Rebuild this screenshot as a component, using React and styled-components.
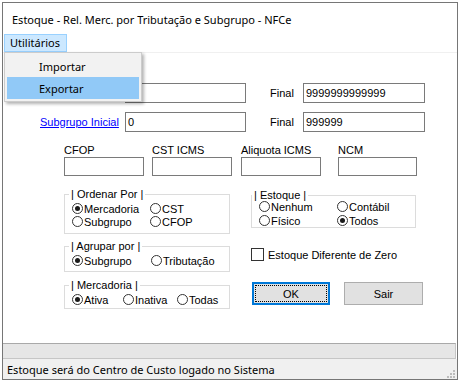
import React from 'react';
import styled, { createGlobalStyle } from 'styled-components';

const Global = createGlobalStyle`
  html, body { margin: 0; padding: 0; background: #ffffff; }
  body { width: 461px; height: 391px; overflow: hidden; }
`;

const ui = `"Noto Sans", "Liberation Sans", sans-serif`;
const vcl = `"Liberation Sans", Arial, sans-serif`;

const Window = styled.div`
  position: relative;
  margin: 2px 0 0 2px;
  width: 456px;
  height: 378px;
  box-sizing: border-box;
  border: 1px solid #767676;
  background: #ffffff;
  display: flex;
  flex-direction: column;
`;

const TitleBar = styled.div`
  flex: none;
  height: 30px;
  box-sizing: border-box;
  display: flex;
  align-items: center;
  padding: 3px 0 0 9px;
  font: 11px ${ui};
  color: #000;
`;

const MenuBar = styled.div`
  flex: none;
  height: 20px;
  box-sizing: border-box;
  display: flex;
  padding: 1px 0 0 1px;
  border-bottom: 1px solid #f0f0f0;
`;

const MenuItem = styled.div`
  height: 18px;
  box-sizing: border-box;
  padding: 0 6px 0 5px;
  border: 1px solid ${(p) => (p.$open ? '#99d1ff' : 'transparent')};
  background: ${(p) => (p.$open ? '#cce8ff' : 'transparent')};
  font: 11px/16px ${ui};
  color: #000;
`;

const Dropdown = styled.div`
  position: absolute;
  top: 49px;
  left: 1px;
  width: 138px;
  height: 50px;
  box-sizing: border-box;
  padding: 2px;
  border: 1px solid #cccccc;
  background: #f2f2f2;
  box-shadow: 2px 2px 3px rgba(0, 0, 0, 0.3);
  z-index: 2;
`;

const DropItem = styled.div`
  height: 22px;
  box-sizing: border-box;
  padding-left: 32px;
  display: flex;
  align-items: center;
  font: 11px ${ui};
  color: #000;
  background: ${(p) => (p.$hover ? '#91c9f7' : 'transparent')};
`;

const Client = styled.div`
  flex: 1;
  padding-top: 30px;
  box-sizing: border-box;
  font: 11px ${vcl};
  color: #000;
`;

const FieldRow = styled.div`
  display: flex;
  align-items: center;
  height: 20px;
  margin-left: 37px;
  margin-bottom: ${(p) => p.$mb || 0}px;
`;

const RowLabel = styled.span`
  width: ${(p) => p.$w}px;
  margin-left: ${(p) => p.$ml || 0}px;
  flex: none;
  white-space: nowrap;
  color: ${(p) => (p.$link ? '#0000ff' : '#000')};
  text-decoration: ${(p) => (p.$link ? 'underline' : 'none')};
`;

const Edit = styled.div`
  width: ${(p) => p.$w}px;
  height: ${(p) => p.$h || 20}px;
  flex: none;
  box-sizing: border-box;
  border: 1px solid #7a7a7a;
  background: #fff;
  padding: 0 2px;
  display: flex;
  align-items: center;
  font: 11px ${vcl};
  color: #000;
`;

const FilterRow = styled.div`
  display: flex;
  margin: 12px 0 0 61px;
`;

const Field = styled.div`
  display: flex;
  flex-direction: column;
  margin-left: ${(p) => p.$ml || 0}px;
`;

const FieldLabel = styled.span`
  height: 13px;
  line-height: 13px;
  white-space: nowrap;
`;

const Columns = styled.div`
  display: flex;
  gap: 21px;
  margin: 12px 0 0 61px;
`;

const Column = styled.div`
  display: flex;
  flex-direction: column;
  width: ${(p) => p.$w}px;
  padding-top: ${(p) => p.$pt || 0}px;
`;

const Group = styled.fieldset`
  width: ${(p) => p.$w || 166}px;
  margin: 0 0 ${(p) => p.$mb || 0}px 0;
  padding: ${(p) => p.$pt}px 0 ${(p) => p.$pb}px ${(p) => p.$pl}px;
  border: 1px solid #dcdcdc;
  min-inline-size: 0;
  box-sizing: border-box;
`;

const Legend = styled.legend`
  padding: 0 2px;
  font: 11px/13px ${vcl};
  white-space: nowrap;
`;

const RadioGrid = styled.div`
  display: grid;
  grid-template-columns: ${(p) => p.$cols};
  row-gap: ${(p) => p.$rg || 0}px;
  margin: ${(p) => p.$mt || 0}px 0 0 ${(p) => p.$ml}px;
`;

const RadioItem = styled.label`
  display: flex;
  align-items: center;
  height: 13px;
  gap: 1px;
  white-space: nowrap;
`;

const Circle = styled.span`
  width: 11px;
  height: 11px;
  box-sizing: border-box;
  border: 1px solid #333;
  border-radius: 50%;
  background: #fff;
  display: flex;
  align-items: center;
  justify-content: center;
  flex: none;
  &::after {
    content: '';
    width: 5px;
    height: 5px;
    border-radius: 50%;
    background: ${(p) => (p.$on ? '#1a1a1a' : 'transparent')};
  }
`;

const Radio = ({ on, children }) => (
  <RadioItem>
    <Circle $on={on} />
    <span>{children}</span>
  </RadioItem>
);

const CheckRow = styled.label`
  display: flex;
  align-items: center;
  gap: 4px;
  height: 13px;
  margin-top: 20px;
  white-space: nowrap;
`;

const Box = styled.span`
  width: 13px;
  height: 13px;
  box-sizing: border-box;
  border: 1px solid #333;
  background: #fff;
  flex: none;
`;

const ButtonRow = styled.div`
  display: flex;
  gap: 14px;
  margin: 21px 0 0 1px;
`;

const Button = styled.div`
  width: ${(p) => p.$w}px;
  height: 23px;
  box-sizing: border-box;
  background: #e1e1e1;
  border: ${(p) => (p.$default ? '2px solid #0078d7' : '1px solid #adadad')};
  padding: ${(p) => (p.$default ? '1px' : '0')};
  display: flex;
  font: 11px ${vcl};
  color: #000;
`;

const ButtonFace = styled.span`
  flex: 1;
  display: flex;
  align-items: center;
  justify-content: center;
  border: 1px dotted ${(p) => (p.$focus ? '#000' : 'transparent')};
`;

const Panel = styled.div`
  flex: none;
  height: 16px;
  box-sizing: border-box;
  margin-right: 1px;
  background: #e6e6e6;
  border-top: 1px solid #a9a9a9;
  border-right: 1px solid #c6c6c6;
  border-bottom: 1px solid #c6c6c6;
`;

const StatusBar = styled.div`
  flex: none;
  height: 20px;
  box-sizing: border-box;
  display: flex;
  align-items: center;
  justify-content: space-between;
  padding: 0 0 0 4px;
  background: #f0f0f0;
  font: 11px ${ui};
  color: #000;
`;

const Grip = styled.svg`
  align-self: flex-end;
  margin: 0 2px 1px 0;
`;

export default function App() {
  return (
    <>
      <Global />
      <Window>
        <TitleBar>Estoque - Rel. Merc. por Tributação e Subgrupo - NFCe</TitleBar>
        <MenuBar>
          <MenuItem $open>Utilitários</MenuItem>
        </MenuBar>
        <Dropdown>
          <DropItem>Importar</DropItem>
          <DropItem $hover>Exportar</DropItem>
        </Dropdown>
        <Client>
          <FieldRow $mb={9}>
            <RowLabel $w={85} />
            <Edit $w={121} />
            <RowLabel $w={33} $ml={24}>Final</RowLabel>
            <Edit $w={122}>9999999999999</Edit>
          </FieldRow>
          <FieldRow>
            <RowLabel $w={85} $link>Subgrupo Inicial</RowLabel>
            <Edit $w={121}>0</Edit>
            <RowLabel $w={33} $ml={24}>Final</RowLabel>
            <Edit $w={122}>999999</Edit>
          </FieldRow>
          <FilterRow>
            <Field>
              <FieldLabel>CFOP</FieldLabel>
              <Edit $w={80} $h={19} />
            </Field>
            <Field $ml={8}>
              <FieldLabel>CST ICMS</FieldLabel>
              <Edit $w={80} $h={19} />
            </Field>
            <Field $ml={9}>
              <FieldLabel>Aliquota ICMS</FieldLabel>
              <Edit $w={80} $h={19} />
            </Field>
            <Field $ml={17}>
              <FieldLabel>NCM</FieldLabel>
              <Edit $w={79} $h={19} />
            </Field>
          </FilterRow>
          <Columns>
            <Column $w={166}>
              <Group $pt={1} $pb={5} $pl={4} $mb={6}>
                <Legend>| Ordenar Por |</Legend>
                <RadioGrid $cols="78px 78px" $ml={3}>
                  <Radio on>Mercadoria</Radio>
                  <Radio>CST</Radio>
                  <Radio>Subgrupo</Radio>
                  <Radio>CFOP</Radio>
                </RadioGrid>
              </Group>
              <Group $pt={1} $pb={4} $pl={4} $mb={7}>
                <Legend>| Agrupar por |</Legend>
                <RadioGrid $cols="79px 79px" $ml={3}>
                  <Radio on>Subgrupo</Radio>
                  <Radio>Tributação</Radio>
                </RadioGrid>
              </Group>
              <Group $pt={1} $pb={2} $pl={4}>
                <Legend>| Mercadoria |</Legend>
                <RadioGrid $cols="51px 54px 60px" $ml={3}>
                  <Radio on>Ativa</Radio>
                  <Radio>Inativa</Radio>
                  <Radio>Todas</Radio>
                </RadioGrid>
              </Group>
            </Column>
            <Column $w={172} $pt={1}>
              <Group $w={165} $pt={0} $pb={0} $pl={0}>
                <Legend>| Estoque |</Legend>
                <RadioGrid $cols="78px 78px" $ml={7} $mt={-2} $rg={1}>
                  <Radio>Nenhum</Radio>
                  <Radio>Contábil</Radio>
                  <Radio>Físico</Radio>
                  <Radio on>Todos</Radio>
                </RadioGrid>
              </Group>
              <CheckRow>
                <Box />
                <span>Estoque Diferente de Zero</span>
              </CheckRow>
              <ButtonRow>
                <Button $w={78} $default>
                  <ButtonFace $focus>OK</ButtonFace>
                </Button>
                <Button $w={79}>
                  <ButtonFace>Sair</ButtonFace>
                </Button>
              </ButtonRow>
            </Column>
          </Columns>
        </Client>
        <Panel />
        <StatusBar>
          <span>Estoque será do Centro de Custo logado no Sistema</span>
          <Grip width="9" height="9" viewBox="0 0 9 9">
            <rect x="7" y="1" width="2" height="2" fill="#bcbcbc" />
            <rect x="4" y="4" width="2" height="2" fill="#bcbcbc" />
            <rect x="7" y="4" width="2" height="2" fill="#bcbcbc" />
            <rect x="1" y="7" width="2" height="2" fill="#bcbcbc" />
            <rect x="4" y="7" width="2" height="2" fill="#bcbcbc" />
            <rect x="7" y="7" width="2" height="2" fill="#bcbcbc" />
          </Grip>
        </StatusBar>
      </Window>
    </>
  );
}
